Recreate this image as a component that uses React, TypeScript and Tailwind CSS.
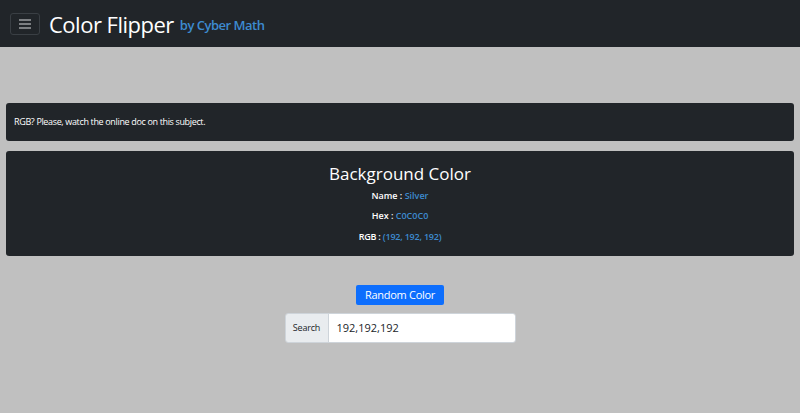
export default function App() {
  return (
    <div className="min-h-[413px] bg-[#c0c0c0] font-['Open_Sans',sans-serif]">
      <nav className="h-[47px] bg-[#212529] flex items-center px-[10px]">
        <button className="w-[30px] h-[22px] border border-[#3a3f44] rounded-[3px] flex items-center justify-center">
          <svg width="12" height="10" viewBox="0 0 12 10" fill="none" stroke="#9a9da0" strokeWidth="1.3">
            <path d="M0 1h12M0 5h12M0 9h12" />
          </svg>
        </button>
        <span className="ml-[9px] text-white text-[22px] leading-none font-medium tracking-[-0.5px]">Color Flipper</span>
        <span className="ml-[6px] mt-[5px] text-[#3d8bd0] text-[13px] font-semibold tracking-[-0.5px]">by Cyber Math</span>
      </nav>

      <div className="px-[6px] pt-[56px]">
        <div className="bg-[#212529] rounded-[3px] h-[38px] flex items-center px-[8px] text-white text-[9px] tracking-[-0.35px]">
          RGB? Please, watch the online doc on this subject.
        </div>
        <div className="mt-[10px] bg-[#212529] rounded-[3px] h-[105px] flex flex-col items-center pt-[11px] text-white">
          <h2 className="text-[17px] leading-[24px] font-medium">Background Color</h2>
          <p className="mt-[4px] text-[9px] font-semibold leading-[12px]">
            Name : <span className="text-[#3d8bd0]">Silver</span>
          </p>
          <p className="mt-[8px] text-[9px] font-semibold leading-[12px]">
            Hex : <span className="text-[#3d8bd0]">C0C0C0</span>
          </p>
          <p className="mt-[9px] text-[9px] font-semibold leading-[12px] tracking-[-0.2px]">
            RGB : <span className="text-[#3d8bd0]">(192, 192, 192)</span>
          </p>
        </div>
      </div>

      <div className="flex flex-col items-center mt-[29px]">
        <button className="h-[20px] px-[9px] bg-[#0d6efd] text-white text-[11px] tracking-[-0.3px] rounded-[2px]">Random Color</button>
        <div className="mt-[8px] flex w-[231px] h-[30px] rounded-[3px] border border-[#ced4da] overflow-hidden">
          <span className="w-[43px] bg-[#e9ecef] border-r border-[#ced4da] flex items-center justify-center text-[9px] tracking-[-0.2px] text-[#212529]">
            Search
          </span>
          <input
            className="flex-1 bg-white px-[8px] text-[11px] text-[#212529] outline-none"
            defaultValue="192,192,192"
          />
        </div>
      </div>
    </div>
  );
}
